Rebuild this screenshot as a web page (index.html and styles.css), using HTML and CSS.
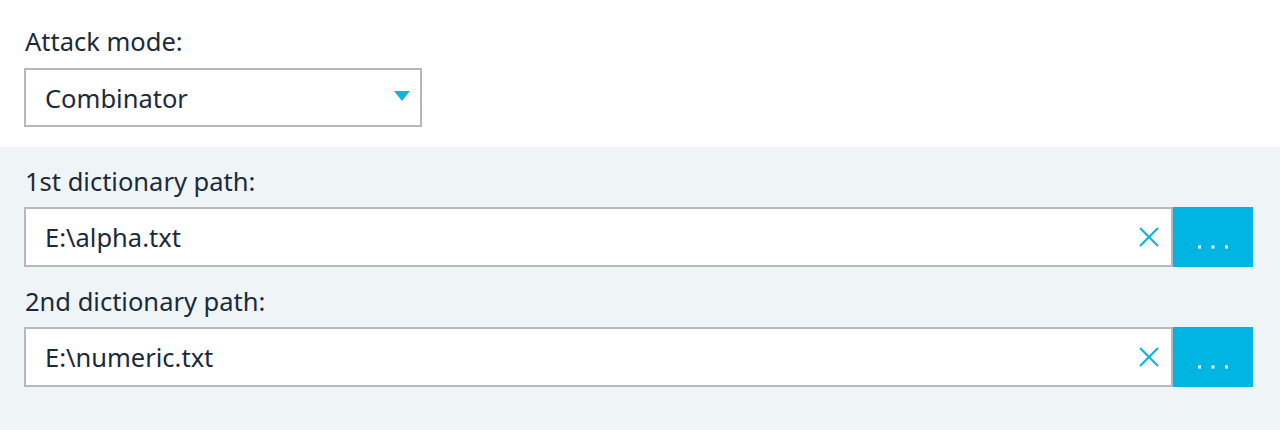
FILE: index.html
```html
<!DOCTYPE html>
<html lang="en">
<head>
    <meta charset="UTF-8">
    <title>Attack settings</title>
    <link rel="stylesheet" href="styles.css">
</head>
<body>

    <!-- Attack mode -->
    <div class="mode-section">
        <label class="field-label">Attack mode:</label>
        <div class="select-box">
            <span class="select-value">Combinator</span>
            <span class="select-arrow"></span>
        </div>
    </div>

    <!-- Dictionaries -->
    <div class="dict-section">
        <label class="field-label">1st dictionary path:</label>
        <div class="path-row">
            <div class="path-input">
                <span class="path-value">E:\alpha.txt</span>
                <svg class="clear-icon" width="20" height="20" viewBox="0 0 20 20">
                    <path d="M1 1 L19 19 M19 1 L1 19" stroke="#0fb4df" stroke-width="2.2" fill="none"/>
                </svg>
            </div>
            <button class="browse-btn">
                <svg width="34" height="6" viewBox="0 0 34 6">
                    <rect x="2" y="1.5" width="3" height="3" fill="#fff"/>
                    <rect x="15.5" y="1.5" width="3" height="3" fill="#fff"/>
                    <rect x="29" y="1.5" width="3" height="3" fill="#fff"/>
                </svg>
            </button>
        </div>

        <label class="field-label">2nd dictionary path:</label>
        <div class="path-row">
            <div class="path-input">
                <span class="path-value">E:\numeric.txt</span>
                <svg class="clear-icon" width="20" height="20" viewBox="0 0 20 20">
                    <path d="M1 1 L19 19 M19 1 L1 19" stroke="#0fb4df" stroke-width="2.2" fill="none"/>
                </svg>
            </div>
            <button class="browse-btn">
                <svg width="34" height="6" viewBox="0 0 34 6">
                    <rect x="2" y="1.5" width="3" height="3" fill="#fff"/>
                    <rect x="15.5" y="1.5" width="3" height="3" fill="#fff"/>
                    <rect x="29" y="1.5" width="3" height="3" fill="#fff"/>
                </svg>
            </button>
        </div>
    </div>

</body>
</html>
```

FILE: styles.css
```css
body {
    margin: 0;
    font-family: "Noto Sans", "Open Sans", sans-serif;
    color: #1b2a3a;
    background-color: #eff4f7;
}

.field-label {
    display: block;
    font-size: 25.5px;
    line-height: 30px;
}

.mode-section {
    background-color: #ffffff;
    padding: 26px 24px 0 24px;
    height: 147px;
    box-sizing: border-box;
}

.mode-section .field-label {
    margin-left: 1px;
    margin-bottom: 12px;
}

.select-box {
    width: 398px;
    height: 59px;
    box-sizing: border-box;
    border: 2px solid #b6b8ba;
    display: flex;
    align-items: center;
    justify-content: space-between;
    padding: 0 10px 0 19px;
}

.select-value {
    font-size: 25.5px;
}

/* small blue triangle */
.select-arrow {
    width: 0;
    height: 0;
    border-left: 8px solid transparent;
    border-right: 8px solid transparent;
    border-top: 10px solid #0fb4df;
    margin-bottom: 4px;
}

.dict-section {
    background-color: #eff4f7;
    padding: 19px 27px 0 24px;
    height: 283px;
    box-sizing: border-box;
}

.dict-section .field-label {
    margin-left: 1px;
    margin-bottom: 11px;
}

.path-row {
    display: flex;
    height: 60px;
    margin-bottom: 19px;
}

.path-input {
    flex: 1;
    display: flex;
    align-items: center;
    justify-content: space-between;
    background-color: #ffffff;
    border: 2px solid #b6b8ba;
    padding: 0 12px 0 19px;
}

.path-value {
    font-size: 25.5px;
}

.clear-icon {
    display: block;
}

.browse-btn {
    width: 80px;
    border: none;
    background-color: #00b5e2;
    padding: 20px 0 0 0;
    cursor: pointer;
    display: flex;
    align-items: center;
    justify-content: center;
}

.browse-btn svg {
    display: block;
}
```
